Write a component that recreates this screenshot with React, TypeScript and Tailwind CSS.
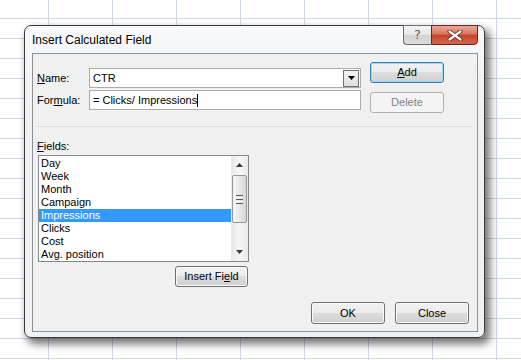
import type { ReactNode } from "react";

const fields = ["Day", "Week", "Month", "Campaign", "Impressions", "Clicks", "Cost", "Avg. position"];

function Btn({ children, className = "", focused = false, disabled = false }: { children: ReactNode; className?: string; focused?: boolean; disabled?: boolean }) {
    const look = disabled
        ? "border-[#adb2b5] bg-[#f4f4f4] text-[#838383]"
        : focused
            ? "border-[#3c7fb1] bg-[linear-gradient(to_bottom,#f2f2f2_0%,#ebebeb_50%,#dddddd_50%,#cfcfcf_100%)] shadow-[inset_0_0_0_1px_#9fd8f6] text-black"
            : "border-[#707070] bg-[linear-gradient(to_bottom,#f2f2f2_0%,#ebebeb_50%,#dddddd_50%,#cfcfcf_100%)] shadow-[inset_0_0_0_1px_#fbfbfb] text-black";
    return (
        <div className={`flex items-center justify-center rounded-[3px] border ${look} ${className}`}>
            {children}
        </div>
    );
}

function ScrollBar() {
    return (
        <div className="flex w-[17px] flex-col bg-[linear-gradient(to_right,#e6e6e6,#f4f4f4_40%,#f4f4f4_60%,#e9e9e9)]">
            <div className="flex h-[18px] items-center justify-center">
                <svg width="7" height="4" viewBox="0 0 7 4"><path d="M0 4 L3.5 0 L7 4 Z" fill="#3c3c3c" /></svg>
            </div>
            <div className="mx-[1px] mt-[1px] flex h-[48px] flex-col items-center justify-center gap-[1px] rounded-[2px] border border-[#979797] bg-[linear-gradient(to_right,#f6f6f6,#e8e8e8_50%,#d6d6d6)]">
                <div className="h-px w-[7px] bg-[#5a5a5a]" />
                <div className="h-px w-[7px] bg-[#fafafa]" />
                <div className="h-px w-[7px] bg-[#5a5a5a]" />
                <div className="h-px w-[7px] bg-[#fafafa]" />
                <div className="h-px w-[7px] bg-[#5a5a5a]" />
            </div>
            <div className="flex-1" />
            <div className="flex h-[18px] items-center justify-center">
                <svg width="7" height="4" viewBox="0 0 7 4"><path d="M0 0 L7 0 L3.5 4 Z" fill="#3c3c3c" /></svg>
            </div>
        </div>
    );
}

function Dialog() {
    return (
        <div className="absolute left-[24px] top-[25px] flex h-[313px] w-[461px] flex-col rounded-[7px] border border-[#3a3a3a] bg-[linear-gradient(to_bottom,#f8f9fa,#eef0f2_30%,#eff1f3)] shadow-[4px_5px_9px_1px_rgba(0,0,0,0.55)]">
            {/* title bar */}
            <div className="relative flex h-[27px] shrink-0 items-center pl-[7px] text-[12px] text-black">
                Insert Calculated Field
                <div className="absolute right-[6px] top-[-1px] flex h-[20px]">
                    <div className="flex w-[28px] items-center justify-center rounded-bl-[4px] border border-r-0 border-[#6b6b6b] bg-[linear-gradient(to_bottom,#f5f5f5,#e6e6e6_50%,#d3d3d3_50%,#dcdcdc)] pb-[1px] font-['DejaVu_Sans',sans-serif] text-[13px] text-[#5a5a5a] [text-shadow:0_0_1px_#fff]">
                        ?
                    </div>
                    <div className="flex w-[47px] items-center justify-center rounded-br-[4px] border border-[#5b2a22] bg-[linear-gradient(to_bottom,#eaa898,#d9765f_45%,#c7442b_50%,#d5654b)]">
                        <svg width="16" height="11" viewBox="0 0 16 11">
                            <path d="M2.5 1.5 L13.5 9.5 M13.5 1.5 L2.5 9.5" stroke="#5e2519" strokeWidth="4" strokeLinecap="round" />
                            <path d="M2.5 1.5 L13.5 9.5 M13.5 1.5 L2.5 9.5" stroke="#ffffff" strokeWidth="2.2" strokeLinecap="round" />
                        </svg>
                    </div>
                </div>
            </div>

            {/* client area */}
            <div className="mb-[5px] ml-[7px] mr-[6px] flex flex-1 flex-col border border-[#8c9196] bg-[#f0f0f0] pl-[4px] pr-[6px] pt-[8px]">
                <div className="flex">
                    <div className="mt-[6px] flex w-[324px] flex-col gap-[2px]">
                        <div className="flex h-[20px] items-center">
                            <span className="w-[52px]"><u>N</u>ame:</span>
                            <div className="flex h-full flex-1 items-center border border-[#abadb3] bg-white pl-[3px]">
                                <span className="flex-1">CTR</span>
                                <div className="mr-px flex h-[17px] w-[16px] items-center justify-center border border-[#707070] bg-[linear-gradient(to_bottom,#f5f5f5,#dedede)]">
                                    <svg width="7" height="4" viewBox="0 0 7 4"><path d="M0 0 L7 0 L3.5 4 Z" fill="#000" /></svg>
                                </div>
                            </div>
                        </div>
                        <div className="flex h-[20px] items-center">
                            <span className="w-[52px]">For<u>m</u>ula:</span>
                            <div className="flex h-full flex-1 items-center border border-[#abadb3] bg-white pl-[3px]">
                                <span>= Clicks/ Impressions</span>
                                <div className="h-[13px] w-px bg-black" />
                            </div>
                        </div>
                    </div>
                    <div className="ml-[9px] flex w-[74px] flex-col gap-[9px]">
                        <Btn focused className="h-[21px]"><span><u>A</u>dd</span></Btn>
                        <Btn disabled className="h-[21px]">Delete</Btn>
                    </div>
                </div>

                <div className="mt-[13px] h-px w-[434px] bg-[#d5dfe5]" />

                <div className="mt-[12px] h-[15px] leading-[15px]"><u>F</u>ields:</div>

                <div className="ml-px mt-px flex h-[107px] w-[211px] border border-[#828790] bg-white">
                    <div className="w-[192px] pt-px">
                        {fields.map((f) => (
                            <div
                                key={f}
                                className={`h-[13px] pl-[2px] leading-[13px] ${f === "Impressions" ? "bg-[#3399ff] text-white" : "text-black"}`}
                            >
                                {f}
                            </div>
                        ))}
                    </div>
                    <ScrollBar />
                </div>

                <div className="ml-px mt-[4px] flex w-[211px] justify-end pr-px">
                    <Btn className="h-[21px] w-[73px]"><span>Insert Fi<u>e</u>ld</span></Btn>
                </div>

                <div className="mb-[7px] mr-[2px] mt-auto flex justify-end gap-[10px]">
                    <Btn className="h-[22px] w-[74px]">OK</Btn>
                    <Btn className="h-[22px] w-[74px]">Close</Btn>
                </div>
            </div>
        </div>
    );
}

export default function App() {
    return (
        <div className="relative h-[360px] w-[521px] overflow-hidden bg-white bg-[linear-gradient(to_right,#d0d7e5_1px,transparent_1px),linear-gradient(to_bottom,#d0d7e5_1px,transparent_1px)] bg-size-[64px_20px] bg-position-[48px_18px] font-['Liberation_Sans',Arial,sans-serif] text-[11px] text-black">
            <Dialog />
        </div>
    );
}
